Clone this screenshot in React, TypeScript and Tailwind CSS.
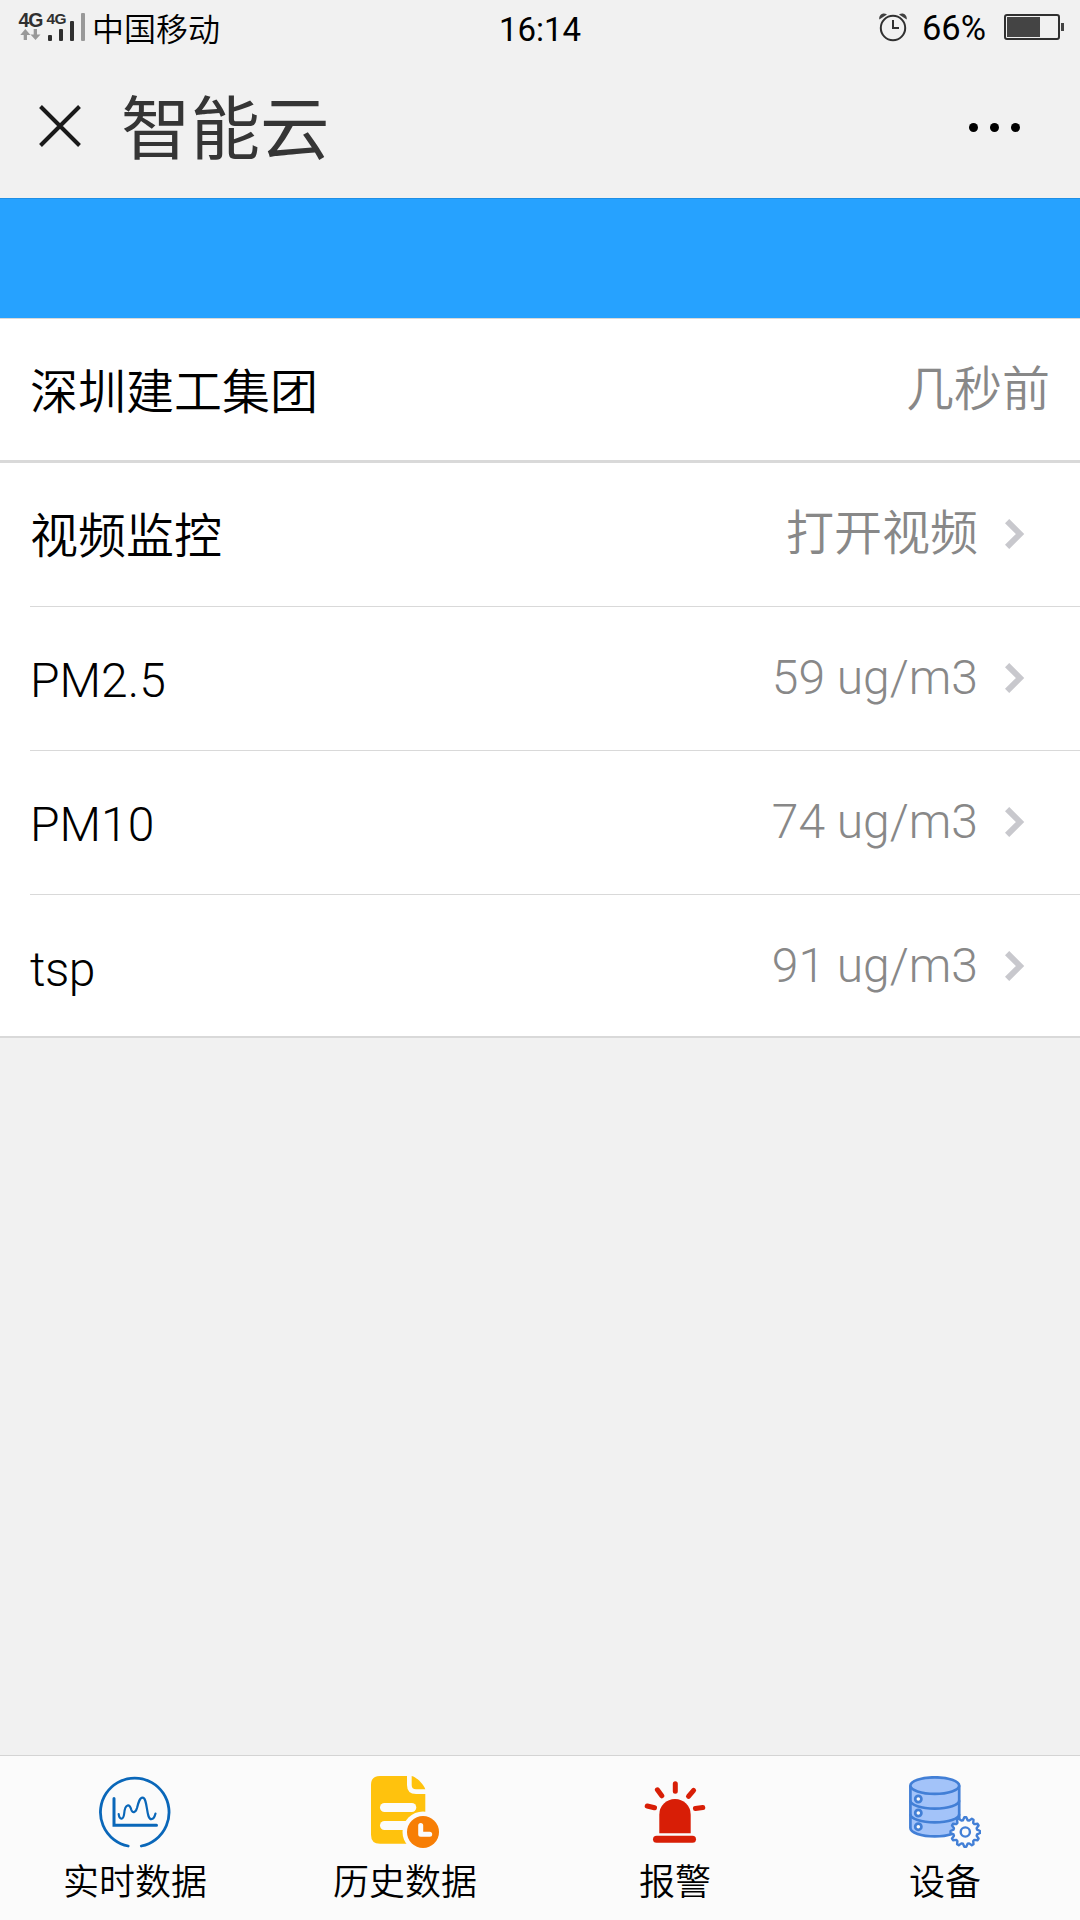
const rows = [
  { name: "视频监控", value: "打开视频" },
  { name: "PM2.5", value: "59 ug/m3" },
  { name: "PM10", value: "74 ug/m3" },
  { name: "tsp", value: "91 ug/m3" },
];

const gearPoints = Array.from({ length: 48 }, (_, i) => {
  const r = i % 4 < 2 ? 14.8 : 12;
  const a = ((i - 0.5) * Math.PI) / 24;
  return `${56.3 + r * Math.sin(a)},${56 - r * Math.cos(a)}`;
}).join(" ");

const RealtimeIcon = () => (
  <svg
    viewBox="0 0 72 72"
    className="size-[72px]"
    fill="none"
    stroke="#0a67b9"
    strokeLinecap="round"
  >
    <path d="M29.2 70A34.3 34.3 0 1 1 42.3 70" strokeWidth="2.8" />
    <path d="M15 22.5V49.3H57.5" strokeWidth="3" />
    <path
      d="M19.7 38.2C20.4 44 24.4 44.5 25.2 37.5C26 27.5 31 27.5 32.2 33.5C33.5 37.5 36.5 37 38 32C39.5 26 40.8 21.6 43.5 21.6C49 21.6 46.8 43.2 52.3 43.2C54.6 43.2 55.8 40.5 56.5 37.6"
      strokeWidth="2.2"
    />
  </svg>
);

const HistoryIcon = () => (
  <svg viewBox="0 0 72 72" className="size-[72px]">
    <path
      d="M11 0H38V9Q38 18 47 18H56.3V67.7H11Q2 67.7 2 58.7V9Q2 0 11 0Z"
      fill="#ffc20d"
    />
    <path d="M42.7 0C48 1.5 54.5 8 56.3 13.3H47Q42.7 13.3 42.7 9Z" fill="#ffc20d" />
    <rect x="11" y="27" width="36.3" height="9" rx="4.5" fill="#fbfbfb" />
    <rect x="11" y="45" width="34" height="9" rx="4.5" fill="#fbfbfb" />
    <circle cx="54" cy="56" r="20.5" fill="#fbfbfb" />
    <circle cx="54" cy="56" r="16" fill="#f77e05" />
    <path
      d="M51.7 49.5V58.3H60.7"
      fill="none"
      stroke="#fbfbfb"
      strokeWidth="5"
      strokeLinecap="round"
      strokeLinejoin="round"
    />
  </svg>
);

const AlarmIcon = () => (
  <svg viewBox="0 0 72 72" className="size-[72px]" fill="#d81e06">
    <path d="M20.3 57.3V38.7A15.7 15.7 0 0 1 51.7 38.7V57.3Z" />
    <rect x="14" y="59.7" width="43" height="7" rx="3.5" />
    <path
      d="M36.3 7.7V15.2M18.4 13.8L22.8 19.8M54.6 14.4L49.5 20.4M8.2 30L15.5 31.8M63.8 31.6L56.4 32.5"
      stroke="#d81e06"
      strokeWidth="5"
      strokeLinecap="round"
    />
  </svg>
);

const DeviceIcon = () => (
  <svg
    viewBox="0 0 72 72"
    className="size-[72px]"
    fill="#a3c3f9"
    stroke="#427fd6"
    strokeWidth="2.7"
  >
    <path d="M1.4 9.5V52C1.4 56.7 12.3 60.4 25.8 60.4S50.2 56.7 50.2 52V9.5" />
    <ellipse cx="25.8" cy="9.6" rx="24.4" ry="8.3" />
    <path
      d="M1.4 24.5C1.4 29 12.3 32.6 25.8 32.6S50.2 29 50.2 24.5M1.4 38.3C1.4 42.8 12.3 46.4 25.8 46.4S50.2 42.8 50.2 38.3"
      fill="none"
    />
    <g fill="#fbfbfb">
      <circle cx="9.3" cy="23" r="3.1" />
      <circle cx="9.3" cy="37" r="3.1" />
      <circle cx="9.3" cy="50.7" r="3.1" />
      <polygon points={gearPoints} strokeWidth="2.4" strokeLinejoin="round" />
      <circle cx="56.3" cy="56" r="4.6" strokeWidth="2.4" />
    </g>
  </svg>
);

const tabs = [
  { label: "实时数据", Icon: RealtimeIcon },
  { label: "历史数据", Icon: HistoryIcon },
  { label: "报警", Icon: AlarmIcon },
  { label: "设备", Icon: DeviceIcon },
];

const StatusBar = () => (
  <div className="grid grid-cols-3 items-center h-14 pl-[18px] pr-4 text-black">
    <div className="flex items-center">
      <svg viewBox="18 0 70 56" className="w-[70px] h-14" fill="#303030">
        <g fontFamily="Liberation Sans" fontWeight="700">
          <text x="18.5" y="27" fontSize="19.5" textLength="25">
            4G
          </text>
          <text x="46.5" y="24" fontSize="15.5" textLength="20">
            4G
          </text>
        </g>
        <path
          d="M25.3 29L30.5 35H27V40H23.7V35H20.3ZM35.5 40L30.5 34.5H33.7V29H37V34.5H40.5Z"
          fill="#999"
        />
        <rect x="48" y="35" width="4" height="6" rx="1" />
        <rect x="59" y="29" width="4" height="12" rx="1" />
        <rect x="70" y="21" width="4" height="20" rx="1" />
        <rect x="81" y="13" width="4" height="28" rx="1" fill="#999" />
      </svg>
      <span className="ml-1 pt-[3px] text-[32px] font-[350] leading-none">中国移动</span>
    </div>
    <div className="pt-[2px] pr-[2px] text-center text-[33px] leading-none">16:14</div>
    <div className="flex items-center justify-end">
      <svg viewBox="0 0 28 56" className="w-7 h-14" fill="none" stroke="#303030">
        <circle cx="14" cy="28" r="12.2" strokeWidth="2" />
        <path d="M14 20V28H20" strokeWidth="2" />
        <path
          d="M0.3 19.5C-0.5 15 4 11.5 8 14.5ZM27.7 19.5C28.5 15 24 11.5 20 14.5Z"
          fill="#404040"
          stroke="none"
        />
      </svg>
      <span className="w-[66px] ml-[15px] text-[34.5px] leading-none">66%</span>
      <svg viewBox="0 0 60 56" className="w-[60px] h-14 ml-4" fill="#444">
        <rect
          x="1"
          y="15"
          width="54"
          height="24"
          rx="2"
          fill="none"
          stroke="#303030"
          strokeWidth="2"
        />
        <rect x="3" y="17" width="33" height="20" />
        <rect x="57" y="23" width="3" height="8" />
      </svg>
    </div>
  </div>
);

const App = () => {
  return (
    <div className="flex flex-col h-[1920px] w-[1080px] overflow-hidden bg-[#f1f1f1] font-[Roboto,'Noto_Sans_CJK_SC',sans-serif]">
      <StatusBar />
      <div className="flex items-center h-[142px] px-[39px] pb-[3px]">
        <svg viewBox="0 0 42 42" className="size-[42px]" stroke="#1a1a1a" strokeWidth="4">
          <path d="M1.5 1.5L40.5 40.5M40.5 1.5L1.5 40.5" />
        </svg>
        <div className="ml-10 pt-[10px] text-[69.5px] leading-none text-[#353535]">智能云</div>
        <div className="flex gap-3 ml-auto mr-[21px] mt-[4px]">
          <div className="size-[9px] rounded-full bg-black"></div>
          <div className="size-[9px] rounded-full bg-black"></div>
          <div className="size-[9px] rounded-full bg-black"></div>
        </div>
      </div>
      <div className="h-[120px] bg-[#26a2ff] border-t border-[#1f8fe6]"></div>
      <div className="flex items-center justify-between h-[145px] pl-[30px] pr-[30px] text-5xl font-[350] bg-white border-t border-b-3 border-t-[#d9d9d9] border-b-[#d9d9d9]">
        <div className="pt-[6px] text-black">深圳建工集团</div>
        <div className="text-[#888]">几秒前</div>
      </div>
      <div className="h-[575px] pl-[30px] text-5xl font-[350] bg-white border-b-2 border-[#d9d9d9]">
        {rows.map((row) => {
          return (
            <div
              key={row.name}
              className="group flex items-center justify-between h-36 pr-[55px] border-b border-[#d9d9d9] last:border-b-0 last:h-[141px]"
            >
              <div className="pt-1 group-last:pt-2 group-last:tracking-[-0.5px] text-black">
                {row.name}
              </div>
              <div className="flex items-center pb-[2px] group-last:pb-0 text-[#888]">
                {row.value}
                <svg
                  viewBox="0 0 20 30"
                  className="w-5 h-[30px] ml-[27px]"
                  fill="none"
                  stroke="#c8c8cd"
                  strokeWidth="6"
                >
                  <path d="M2.1 2.1L15 15L2.1 27.9" />
                </svg>
              </div>
            </div>
          );
        })}
      </div>
      <div className="grid grid-cols-4 h-[165px] mt-auto pt-5 bg-[#fbfbfb] border-t border-[#d4d4d4]">
        {tabs.map(({ label, Icon }) => {
          return (
            <div key={label} className="flex flex-col items-center">
              <Icon />
              <div className="mt-[15px] text-4xl font-[350] text-black">{label}</div>
            </div>
          );
        })}
      </div>
    </div>
  );
};
export default App;
